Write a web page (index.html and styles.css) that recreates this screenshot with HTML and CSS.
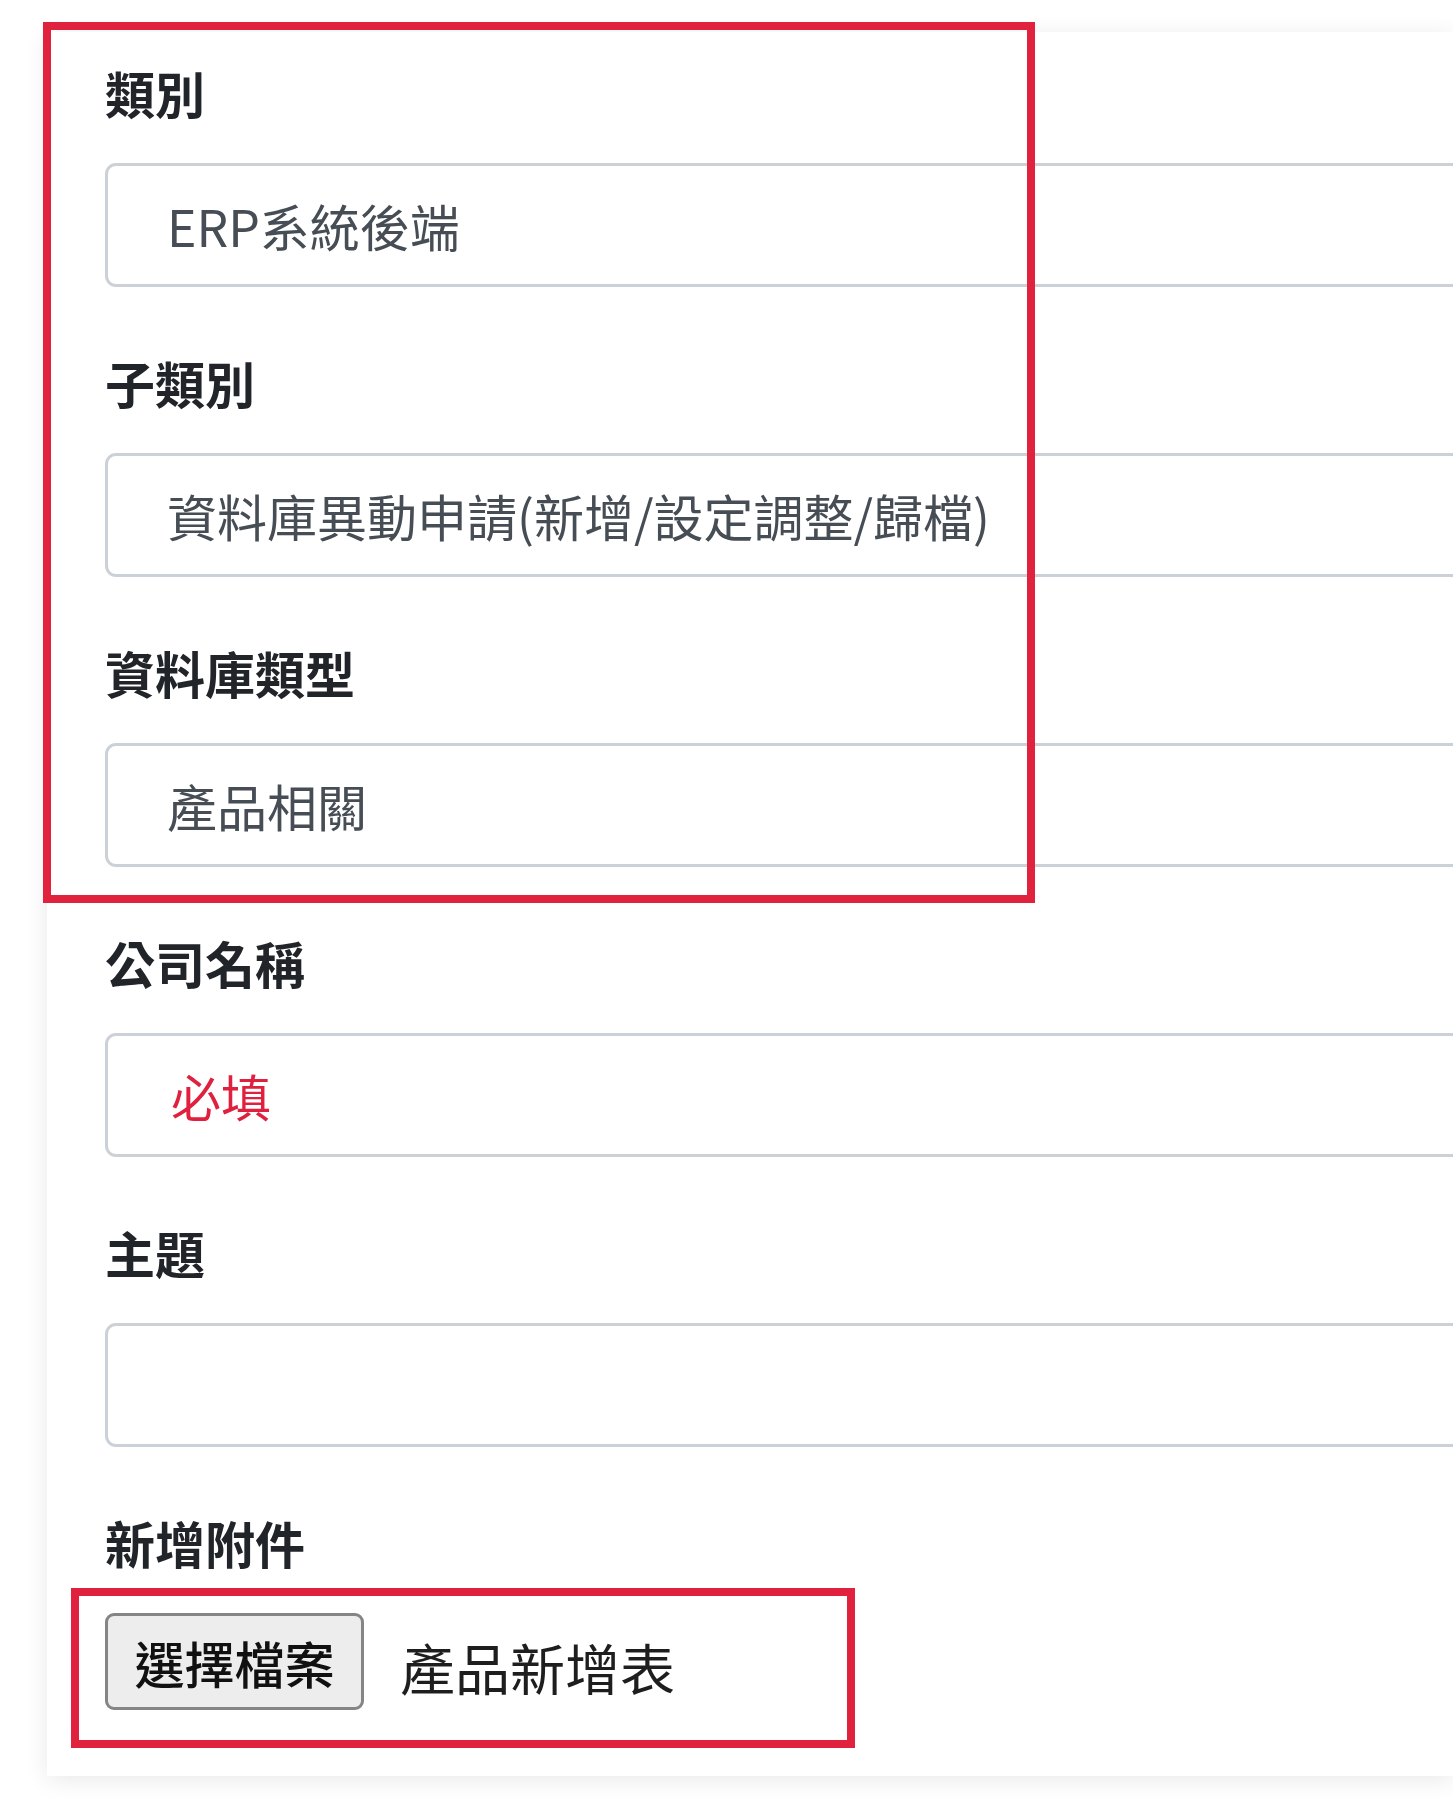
FILE: index.html
```html
<!DOCTYPE html>
<html lang="zh-Hant">
<head>
<meta charset="utf-8">
<title>表單</title>
<link rel="stylesheet" href="styles.css">
</head>
<body>
<div class="page">
  <form class="card">
    <div class="field">
      <label class="label">類別</label>
      <div class="control">ERP系統後端</div>
    </div>
    <div class="field">
      <label class="label">子類別</label>
      <div class="control">資料庫異動申請(新增/設定調整/歸檔)</div>
    </div>
    <div class="field">
      <label class="label">資料庫類型</label>
      <div class="control">產品相關</div>
    </div>
    <div class="field">
      <label class="label">公司名稱</label>
      <div class="control control-required">必填</div>
    </div>
    <div class="field">
      <label class="label">主題</label>
      <div class="control"></div>
    </div>
    <div class="field field-last">
      <label class="label">新增附件</label>
      <div class="file-row">
        <span class="file-button">選擇檔案</span>
        <span class="file-name">產品新增表</span>
      </div>
    </div>
  </form>
  <div class="mark mark-top"></div>
  <div class="mark mark-file"></div>
</div>
</body>
</html>
```

FILE: styles.css
```css
html, body {
  margin: 0;
  padding: 0;
  background: #ffffff;
  overflow: hidden;
}

body {
  width: 1453px;
  height: 1817px;
  font-family: "Noto Sans CJK TC", "Noto Sans", sans-serif;
}

.page {
  position: relative;
  width: 1453px;
  height: 1817px;
  padding-top: 32px;
  box-sizing: border-box;
  overflow: hidden;
}

.card {
  margin: 0 0 0 47px;
  width: 1406px;
  box-sizing: border-box;
  padding: 30px 0 66px 58px;
  background: #ffffff;
  box-shadow: 0 4px 22px rgba(0, 0, 0, 0.09);
  overflow: hidden;
}

.field {
  display: flex;
  flex-direction: column;
  margin-bottom: 65px;
}

.field-last {
  margin-bottom: 0;
}

.label {
  display: block;
  font-size: 50px;
  line-height: 60px;
  font-weight: 700;
  color: #212529;
  margin-bottom: 41px;
}

.control {
  height: 124px;
  box-sizing: border-box;
  margin-right: -24px;
  border: 3px solid #cbd1d7;
  border-radius: 11px;
  padding: 0 59px;
  display: flex;
  align-items: center;
  font-size: 50px;
  line-height: 60px;
  font-weight: 400;
  color: #464d54;
  white-space: nowrap;
}

.control-required {
  color: #e0203f;
  padding-left: 63px;
}

.file-row {
  display: flex;
  align-items: center;
  gap: 36px;
}

.file-button {
  width: 259px;
  height: 97px;
  box-sizing: border-box;
  border: 3px solid #858585;
  border-radius: 9px;
  background: #ededed;
  display: flex;
  align-items: center;
  justify-content: center;
  font-size: 50px;
  line-height: 60px;
  font-weight: 500;
  color: #111111;
}

.file-name {
  font-size: 55px;
  line-height: 66px;
  font-weight: 400;
  color: #1e1e1e;
  padding-top: 8px;
}

.mark {
  position: absolute;
  box-sizing: border-box;
  border: 8px solid #e0223f;
  pointer-events: none;
}

.mark-top {
  left: 43px;
  top: 22px;
  width: 992px;
  height: 881px;
}

.mark-file {
  left: 71px;
  top: 1588px;
  width: 784px;
  height: 160px;
}
```
